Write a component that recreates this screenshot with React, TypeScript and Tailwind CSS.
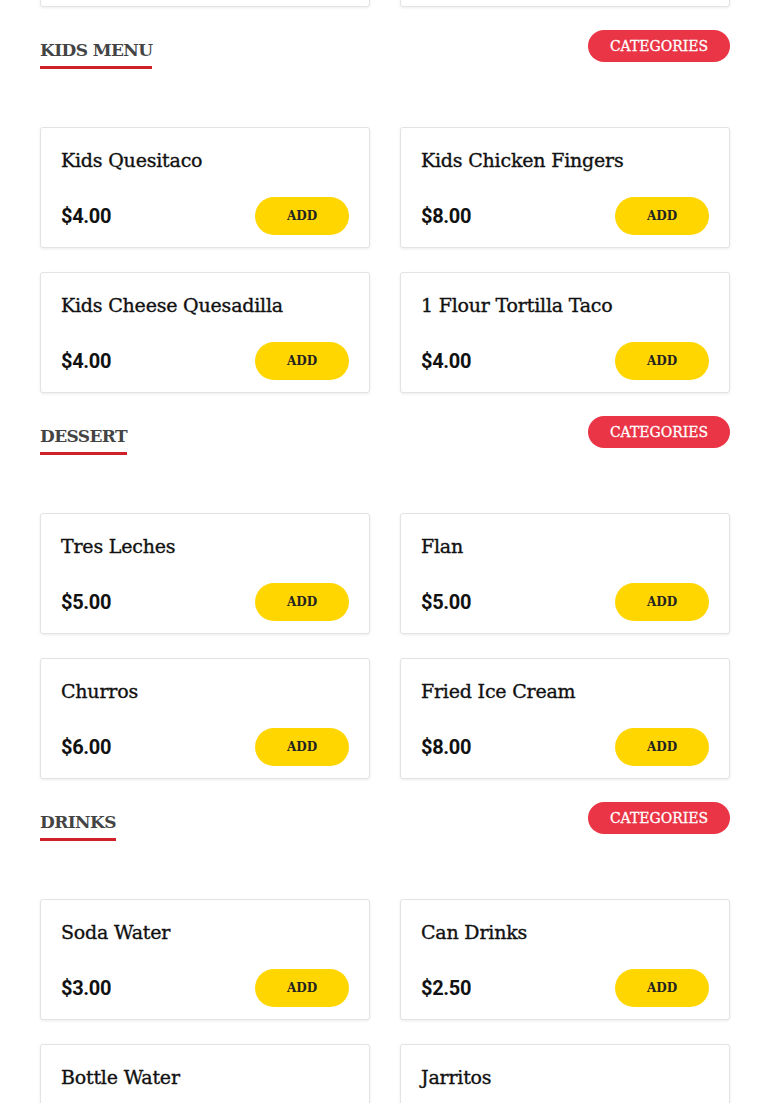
type Item = { name: string; price: string };
type Section = { title: string; items: Item[] };

const sections: Section[] = [
  {
    title: "Kids Menu",
    items: [
      { name: "Kids Quesitaco", price: "$4.00" },
      { name: "Kids Chicken Fingers", price: "$8.00" },
      { name: "Kids Cheese Quesadilla", price: "$4.00" },
      { name: "1 Flour Tortilla Taco", price: "$4.00" },
    ],
  },
  {
    title: "Dessert",
    items: [
      { name: "Tres Leches", price: "$5.00" },
      { name: "Flan", price: "$5.00" },
      { name: "Churros", price: "$6.00" },
      { name: "Fried Ice Cream", price: "$8.00" },
    ],
  },
  {
    title: "Drinks",
    items: [
      { name: "Soda Water", price: "$3.00" },
      { name: "Can Drinks", price: "$2.50" },
      { name: "Bottle Water", price: "$1.50" },
      { name: "Jarritos", price: "$3.00" },
    ],
  },
];

const slab = "font-['Roboto_Slab','DejaVu_Serif',serif]";

function MenuCard({ item }: { item: Item }) {
  return (
    <div className="h-[121px] rounded-[3px] border border-[#e3e3e3] bg-white px-5 pt-[19px] pb-[13px] shadow-[0_1px_3px_rgba(0,0,0,0.08)]">
      <h3
        className={`${slab} text-[19px] leading-[26px] text-[#111] tracking-[-0.2px] [-webkit-text-stroke:0.35px_#111]`}
      >
        {item.name}
      </h3>
      <div className="mt-[24px] flex items-center justify-between">
        <span className="font-['Roboto',sans-serif] text-[20px] font-bold tracking-[-0.3px] text-[#111]">
          {item.price}
        </span>
        <button className={`${slab} h-[38px] w-[94px] rounded-full bg-[#ffd600] text-[12px] font-bold text-[#222]`}>
          ADD
        </button>
      </div>
    </div>
  );
}

function MenuSection({ section }: { section: Section }) {
  return (
    <div>
      <div className="flex items-start justify-between">
        <div className="pt-[8px]">
          <h2
            className={`${slab} border-b-[3px] border-[#d0202a] pb-[4px] text-[17px] font-bold uppercase leading-6 tracking-[-0.6px] text-[#444]`}
          >
            {section.title}
          </h2>
        </div>
        <button
          className={`${slab} h-8 w-[142px] rounded-full bg-[#ea3546] text-[14px] uppercase text-white [-webkit-text-stroke:0.3px_#fff]`}
        >
          Categories
        </button>
      </div>
      <div className="mt-[58px] grid grid-cols-2 gap-x-[30px] gap-y-6">
        {section.items.map((item) => (
          <MenuCard key={item.name} item={item} />
        ))}
      </div>
    </div>
  );
}

export default function App() {
  return (
    <div className="min-h-screen overflow-hidden bg-white">
      <div className="-mt-[114px] flex flex-col gap-[23px] px-10">
        {/* tail of the previous section */}
        <div className="grid grid-cols-2 gap-x-[30px]">
          <MenuCard item={{ name: "Quesadilla", price: "$9.00" }} />
          <MenuCard item={{ name: "Nachos", price: "$9.00" }} />
        </div>
        {sections.map((s) => (
          <MenuSection key={s.title} section={s} />
        ))}
      </div>
    </div>
  );
}
